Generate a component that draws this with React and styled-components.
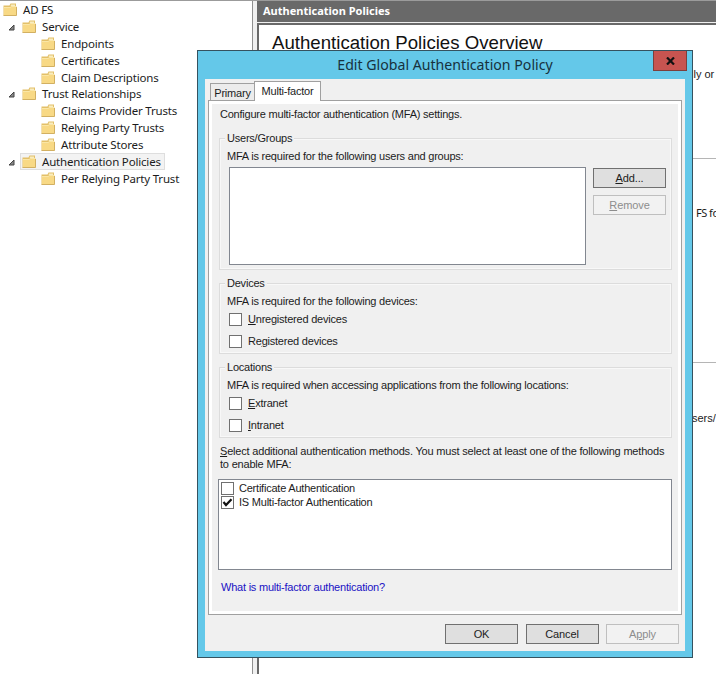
import React from "react";
import styled, { createGlobalStyle } from "styled-components";

const tree = [
  { label: "AD FS", level: 0 },
  { label: "Service", level: 1, open: true },
  { label: "Endpoints", level: 2 },
  { label: "Certificates", level: 2 },
  { label: "Claim Descriptions", level: 2 },
  { label: "Trust Relationships", level: 1, open: true },
  { label: "Claims Provider Trusts", level: 2 },
  { label: "Relying Party Trusts", level: 2 },
  { label: "Attribute Stores", level: 2 },
  { label: "Authentication Policies", level: 1, open: true, selected: true },
  { label: "Per Relying Party Trust", level: 2 },
];

function FolderIcon() {
  return (
    <Folder viewBox="0 0 14 13">
      <path d="M0.500 2.500h6l1-2H13v3h.5v9H0.500z" fill="#e3c069" />
      <path d="M8 1.500h4v2H7.500z" fill="#f8ecc0" />
      <path d="M1 4h6.500l1-1H13v9H1z" fill="#f8d985" />
      <path d="M1 4.500h6.500l1-1H13" fill="none" stroke="#fae6a6" />
      <path d="M0.500 12.500h13V4" fill="none" stroke="#d2b062" />
    </Folder>
  );
}

function CheckBox({ label, accessKey, checked }) {
  const at = accessKey ? label.indexOf(accessKey) : -1;
  return (
    <CheckLabel>
      <Box>
        {checked && (
          <svg width="11" height="11" viewBox="0 0 11 11">
            <path
              d="M1.500 5L4 8L9.500 2.200"
              fill="none"
              stroke="#111"
              strokeWidth="2.200"
            />
          </svg>
        )}
      </Box>
      {at < 0 ? (
        <span>{label}</span>
      ) : (
        <span>
          {label.slice(0, at)}
          <u>{accessKey}</u>
          {label.slice(at + 1)}
        </span>
      )}
    </CheckLabel>
  );
}

function App() {
  return (
    <Desktop>
      <GlobalStyle />
      <Sidebar>
        {tree.map((node) => (
          <TreeRow key={node.label} $level={node.level}>
            {node.open && (
              <Arrow viewBox="0 0 7 7">
                <path d="M6 1v5H1z" fill="#888" stroke="#444" />
              </Arrow>
            )}
            <TreeItem $selected={node.selected}>
              <FolderIcon />
              <TreeLabel>{node.label}</TreeLabel>
            </TreeItem>
          </TreeRow>
        ))}
      </Sidebar>
      <Main>
        <MainHeader>Authentication Policies</MainHeader>
        <MainContent>
          <Overview>
            <h1>Authentication Policies Overview</h1>
            <p>lly or</p>
          </Overview>
          <PrimaryBlock>FS fo</PrimaryBlock>
          <MultiFactorBlock>sers/</MultiFactorBlock>
        </MainContent>
      </Main>

      <Dialog>
        <TitleBar>
          <DialogTitle>Edit Global Authentication Policy</DialogTitle>
          <CloseButton>
            <svg width="9" height="8" viewBox="0 0 9 8">
              <path d="M1 0.500L8 7.500M8 0.500L1 7.500" stroke="#111" strokeWidth="2.200" />
            </svg>
          </CloseButton>
        </TitleBar>
        <Client>
          <Tabs>
            <Tab>Primary</Tab>
            <Tab $active>Multi-factor</Tab>
          </Tabs>
          <Pane>
            <Intro>Configure multi-factor authentication (MFA) settings.</Intro>
            <Group $height={132}>
              <Legend>Users/Groups</Legend>
              <GroupText>MFA is required for the following users and groups:</GroupText>
              <UsersRow>
                <UserList />
                <ButtonColumn>
                  <Button>
                    <span>
                      <u>A</u>dd...
                    </span>
                  </Button>
                  <Button $disabled>
                    <span>
                      <u>R</u>emove
                    </span>
                  </Button>
                </ButtonColumn>
              </UsersRow>
            </Group>
            <Group $height={71}>
              <Legend>Devices</Legend>
              <GroupText>MFA is required for the following devices:</GroupText>
              <Checks>
                <CheckBox label="Unregistered devices" accessKey="U" />
                <CheckBox label="Registered devices" accessKey="g" />
              </Checks>
            </Group>
            <Group $height={71}>
              <Legend>Locations</Legend>
              <GroupText>
                MFA is required when accessing applications from the following locations:
              </GroupText>
              <Checks>
                <CheckBox label="Extranet" accessKey="E" />
                <CheckBox label="Intranet" accessKey="I" />
              </Checks>
            </Group>
            <MethodsText>
              <u>S</u>elect additional authentication methods. You must select at least one
              of the following methods
              <br />
              to enable MFA:
            </MethodsText>
            <MethodList>
              <CheckBox label="Certificate Authentication" />
              <CheckBox label="IS Multi-factor Authentication" checked />
            </MethodList>
            <HelpLink>What is multi-factor authentication?</HelpLink>
          </Pane>
          <Footer>
            <Button>OK</Button>
            <Button>Cancel</Button>
            <Button $disabled>
              <span>
                A<u>p</u>ply
              </span>
            </Button>
          </Footer>
        </Client>
      </Dialog>
    </Desktop>
  );
}

const GlobalStyle = createGlobalStyle`
  * {
    box-sizing: border-box;
  }

  body {
    margin: 0;
    overflow: hidden;
    background-color: white;
  }

  u {
    text-underline-offset: 1px;
    text-decoration-thickness: 1px;
  }

  h1,
  p {
    margin: 0;
    font-weight: normal;
  }
`;

const Desktop = styled.div`
  position: relative;
  display: flex;
  width: 716px;
  height: 674px;
  overflow: hidden;
  border-top: 1px solid #9b9b9b;
  color: #1c1c1c;
  font-family: "Liberation Sans", Arial, sans-serif;
  font-size: 11px;
  white-space: nowrap;
`;

const Sidebar = styled.div`
  width: 253px;
  flex: none;
  border-right: 1px solid #909090;
  font-family: "Noto Sans", "Open Sans", sans-serif;
  font-size: 11.5px;
  letter-spacing: -0.18px;
`;

const TreeRow = styled.div`
  display: flex;
  align-items: center;
  height: 16.9px;
  padding-left: ${(props) => [1, 8, 39][props.$level]}px;
`;

const Arrow = styled.svg`
  width: 7px;
  height: 7px;
  margin: 2px 5px 0 0;
`;

const TreeItem = styled.div`
  display: flex;
  align-items: center;
  gap: 6px;
  height: 17px;
  padding: 0 3px 0 1px;
  border: 1px solid ${(props) => (props.$selected ? "#dedede" : "transparent")};
  background-color: ${(props) => (props.$selected ? "#f3f3f3" : "transparent")};
`;

const Folder = styled.svg`
  width: 14px;
  height: 13px;
  flex: none;
`;

const TreeLabel = styled.span`
  line-height: 15px;
`;

const Main = styled.div`
  flex: 1;
  min-width: 0;
  display: flex;
  flex-direction: column;
  padding-left: 4px;
  background-color: #f0f0f0;
`;

const MainHeader = styled.div`
  flex: none;
  height: 21px;
  padding-left: 6px;
  background-color: #696969;
  color: white;
  font: bold 11px/20px "Noto Sans", "Open Sans", sans-serif;
`;

const MainContent = styled.div`
  flex: 1;
  margin-top: 1px;
  border-top: 2px solid #696969;
  border-left: 2px solid #696969;
  background-color: white;
`;

const Overview = styled.div`
  height: 134px;
  border-bottom: 1px solid #b5b5b5;

  h1 {
    padding: 6px 0 0 13px;
    color: #111;
    font-size: 18.65px;
    line-height: 24px;
  }

  p {
    padding: 12px 0 0 432px;
    line-height: 14px;
  }
`;

const PrimaryBlock = styled.div`
  height: 204px;
  padding: 47px 0 0 437px;
  border-bottom: 1px solid #b5b5b5;
  font: 11px/14px "Noto Sans", "Open Sans", sans-serif;
  letter-spacing: -0.5px;
`;

const MultiFactorBlock = styled.div`
  padding: 48px 0 0 433px;
  line-height: 14px;
`;

/* The dialog floats above the console window */
const Dialog = styled.div`
  position: absolute;
  left: 197px;
  top: 49px;
  width: 496px;
  height: 608px;
  padding: 0 7px 6px;
  border: 1px solid #35525f;
  background-color: #64c8e9;
  letter-spacing: -0.22px;
`;

const TitleBar = styled.div`
  display: flex;
  height: 28px;
  letter-spacing: 0;
`;

const DialogTitle = styled.div`
  flex: 1;
  padding-left: 32px;
  color: #17313d;
  font: 14.15px/28px "Noto Sans", "Open Sans", sans-serif;
  text-align: center;
`;

const CloseButton = styled.div`
  display: flex;
  align-items: center;
  justify-content: center;
  width: 34px;
  height: 20px;
  margin-right: -2px;
  border: 1px solid #7d3f3c;
  border-top: 0;
  background-color: #c75450;
`;

const Client = styled.div`
  height: 572px;
  padding: 3px 3px 0;
  background-color: #f0f0f0;
`;

const Tabs = styled.div`
  display: flex;
  align-items: flex-end;
  height: 18px;
  padding-left: 2px;
`;

const Tab = styled.div`
  height: ${(props) => (props.$active ? 20 : 17)}px;
  width: ${(props) => (props.$active ? 67 : 44)}px;
  margin-bottom: ${(props) => (props.$active ? -1 : 0)}px;
  border: 1px solid #a0a0a0;
  border-bottom: 0;
  border-right-width: ${(props) => (props.$active ? 1 : 0)}px;
  background-color: ${(props) => (props.$active ? "white" : "#ececec")};
  line-height: ${(props) => (props.$active ? 19 : 18)}px;
  text-align: center;
  z-index: 1;
`;

const Pane = styled.div`
  height: 515px;
  padding: 6px 6px 0 7px;
  border: 1px solid #a0a0a0;
  box-shadow: inset 0 0 0 3px white;
  background-color: #f0f0f0;
`;

const Intro = styled.div`
  height: 31px;
  padding-left: 4px;
  line-height: 14px;
`;

const Group = styled.div`
  height: ${(props) => props.$height}px;
  margin: 0 3px 13px;
  padding: 0 5px 0 7px;
  border: 1px solid #dcdcdc;
  box-shadow: inset 0 0 0 1px #f8f8f8;
`;

const Legend = styled.div`
  width: fit-content;
  margin: -8px 0 4px -2px;
  padding: 0 2px;
  background-color: #f0f0f0;
  line-height: 14px;
`;

const GroupText = styled.div`
  line-height: 14px;
`;

const UsersRow = styled.div`
  display: flex;
  justify-content: space-between;
  padding: 4px 0 0 2px;
`;

const UserList = styled.div`
  width: 357px;
  height: 98px;
  border: 1px solid #828790;
  background-color: white;
`;

const ButtonColumn = styled.div`
  display: flex;
  flex-direction: column;
  gap: 7px;
  padding-top: 1px;
`;

const Button = styled.div`
  display: flex;
  align-items: center;
  justify-content: center;
  width: 73px;
  height: 20px;
  border: 1px solid ${(props) => (props.$disabled ? "#bfbfbf" : "#707070")};
  background-color: ${(props) => (props.$disabled ? "#f2f2f2" : "#dfdfdf")};
  color: ${(props) => (props.$disabled ? "#8d8d8d" : "#1c1c1c")};
  letter-spacing: -0.1px;
`;

const Checks = styled.div`
  display: flex;
  flex-direction: column;
  gap: 8px;
  padding: 4px 0 0 2px;
`;

const CheckLabel = styled.div`
  display: flex;
  align-items: center;
  gap: 6px;
  height: 14px;
`;

const Box = styled.div`
  display: flex;
  width: 13px;
  height: 13px;
  border: 1px solid #707070;
  background-color: white;
`;

const MethodsText = styled.div`
  height: 34px;
  margin-top: -6px;
  padding-left: 4px;
  line-height: 13px;
  letter-spacing: -0.19px;
`;

const MethodList = styled.div`
  width: 454px;
  height: 91px;
  margin-left: 2px;
  padding: 1px 2px;
  border: 1px solid #828790;
  background-color: white;

  ${CheckLabel} {
    gap: 5px;
  }
`;

const HelpLink = styled.div`
  padding: 10px 0 0 5px;
  color: #1a12c4;
  line-height: 14px;
`;

const Footer = styled.div`
  display: flex;
  justify-content: flex-end;
  gap: 7.5px;
  padding: 9px 3px 0 0;
`;

export default App;
